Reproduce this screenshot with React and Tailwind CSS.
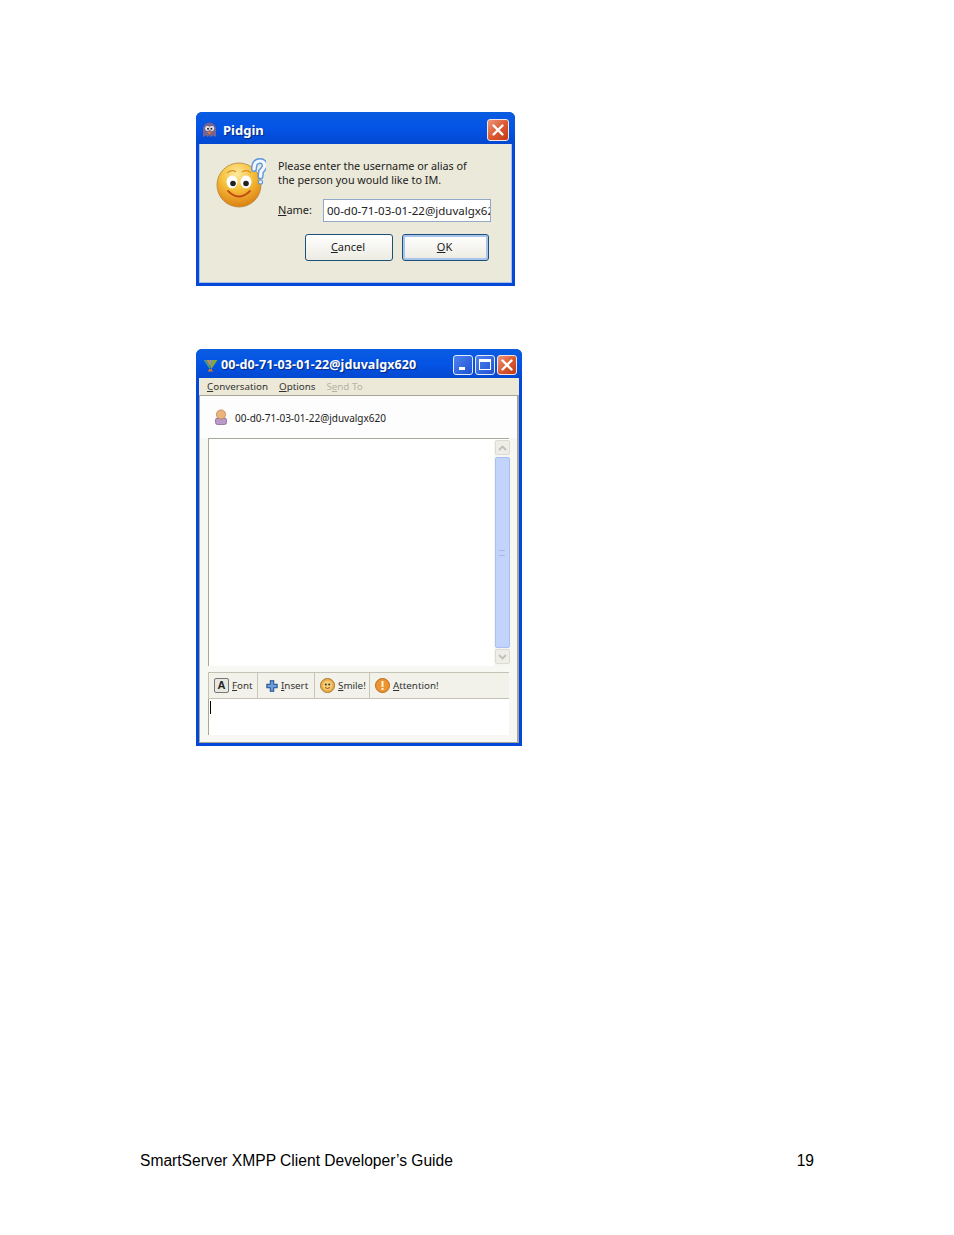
const ui = { fontFamily: '"Noto Sans", "DejaVu Sans", sans-serif' };

function U({ children }) {
  return <span className="underline underline-offset-1">{children}</span>;
}

function CloseBtn({ size = "w-[22px] h-[22px]", extra = "" }) {
  return (
    <div className={`${size} ${extra} rounded-[3px] border border-[#f3e6e0] bg-gradient-to-br from-[#e9967a] via-[#dc5a32] to-[#c03a16] flex items-center justify-center`}>
      <svg width="14" height="14" viewBox="0 0 14 14"><path d="M2.5 2.5 L11.5 11.5 M11.5 2.5 L2.5 11.5" stroke="#fff" strokeWidth="2.4" strokeLinecap="round" /></svg>
    </div>
  );
}

function TitleBar({ icon, title, buttons, h, text }) {
  return (
    <div className={`${h} flex items-center rounded-t-[6px] bg-gradient-to-b from-[#0a5ce0] via-[#0454e6] to-[#0348d0] px-[6px] pt-[4px]`}>
      {icon}
      <span className={`${text} font-bold text-white flex-1`} style={{ ...ui, textShadow: "1px 1px 1px #0a2a80" }}>{title}</span>
      {buttons}
    </div>
  );
}

function GhostIcon() {
  return (
    <svg width="15" height="16" viewBox="0 0 15 16" className="mr-[6px] ml-0">
      <path d="M1 15 V7 a6.5 6.5 0 0 1 13 0 V15 L11 13.5 9 15 7.5 13.5 5.5 15 4 13.5 Z" fill="#77648f" />
      <circle cx="5.5" cy="6.5" r="2.4" fill="#e8e8f0" /><circle cx="9.8" cy="6.5" r="2.4" fill="#e8e8f0" />
      <circle cx="6" cy="6.8" r="1" fill="#222" /><circle cx="9.4" cy="6.8" r="1" fill="#222" />
      <path d="M5 10 L10 9.5 L7.5 12.5 Z" fill="#e9792a" />
    </svg>
  );
}

function Smiley() {
  return (
    <svg width="50" height="50" viewBox="0 0 50 50">
      <defs>
        <radialGradient id="sg" cx="45%" cy="25%" r="80%">
          <stop offset="0%" stopColor="#fdeaa0" /><stop offset="45%" stopColor="#f6c03a" /><stop offset="100%" stopColor="#d9780e" />
        </radialGradient>
      </defs>
      <circle cx="23" cy="27" r="22" fill="url(#sg)" stroke="#b4843c" strokeWidth="0.8" />
      <ellipse cx="16" cy="24" rx="5.5" ry="6.5" fill="#fff" /><ellipse cx="30" cy="24" rx="5.5" ry="6.5" fill="#fff" />
      <circle cx="17" cy="25.5" r="2.8" fill="#222" /><circle cx="30" cy="25.5" r="2.8" fill="#222" />
      <path d="M11 15 q5 -4 9 -1 M26 14 q5 -3 9 1" stroke="#d8902a" strokeWidth="1.2" fill="none" />
      <path d="M12 33 q11 11 22 0" stroke="#c24a18" strokeWidth="1.8" fill="none" strokeLinecap="round" />
      <path d="M38 11 q0 -8 6 -8 q5 0 4.5 5.5 q-1 3 -3.5 5 l-0.5 5" stroke="#5b97dc" strokeWidth="6" fill="none" strokeLinecap="round" />
      <path d="M38 11 q0 -8 6 -8 q5 0 4.5 5.5 q-1 3 -3.5 5 l-0.5 5" stroke="#f4f8fe" strokeWidth="3.2" fill="none" strokeLinecap="round" />
      <circle cx="44.5" cy="24" r="2.6" fill="#5b97dc" /><circle cx="44.5" cy="24" r="1.4" fill="#f4f8fe" />
    </svg>
  );
}

function XpButton({ children, def, w }) {
  return (
    <div className={`${w} h-[27px] pr-[2px] rounded-[3px] border border-[#1c4f7a] bg-gradient-to-b from-white to-[#ecebe2] flex items-center justify-center text-[11px] text-[#222] ${def ? "shadow-[inset_0_0_0_2px_#a9c4ea]" : ""}`} style={ui}>
      {children}
    </div>
  );
}

function Dialog() {
  return (
    <div className="w-[319px] h-[174px] ml-[196px] flex flex-col rounded-t-[6px] bg-[#0348d8]">
      <TitleBar h="h-[32px]" text="text-[13px] pt-[1px]" icon={<GhostIcon />} title="Pidgin" buttons={<CloseBtn extra="-mt-[1px]" />} />
      <div className="flex-1 mx-[3px] mb-[3px] bg-[#ebe9d9] border-x border-b border-[#a9c0e4] flex pt-[15px]">
        <div className="w-[65px] pl-[16px] -mt-[1px] shrink-0"><Smiley /></div>
        <div className="ml-[13px] flex-1 pr-[19px]">
          <p className="text-[10.8px] leading-[14px] text-[#222] whitespace-nowrap" style={ui}>Please enter the username or alias of<br />the person you would like to IM.</p>
          <div className="flex items-center mt-[12px]">
            <span className="w-[45px] text-[11px] text-[#222]" style={ui}><U>N</U>ame:</span>
            <div className="w-[168px] h-[23px] bg-white border border-[#92a9c8] overflow-hidden flex items-center pl-[3px] text-[11.5px] text-[#222] whitespace-nowrap" style={ui}>00-d0-71-03-01-22@jduvalgx620</div>
          </div>
          <div className="flex gap-[9px] mt-[12px] ml-[27px]">
            <XpButton w="w-[88px]"><U>C</U>ancel</XpButton>
            <XpButton w="w-[87px]" def><U>O</U>K</XpButton>
          </div>
        </div>
      </div>
    </div>
  );
}

function VIcon() {
  return (
    <svg width="15" height="13" viewBox="0 0 15 13" className="mr-[3px] ml-[1px]">
      <path d="M0.5 1 L3.5 1 L7.5 8 L6.5 10 Z" fill="#3f9a8e" />
      <path d="M3.5 1 L6.5 1 L7.5 8 Z" fill="#e08a3c" />
      <path d="M6.5 1 L9 1 L7.5 8 Z" fill="#8a9ac0" />
      <path d="M9 1 L14.5 1 L8.5 10 L7.5 8 Z" fill="#86a83a" />
      <path d="M6.5 10 L8.5 10 L10 12.5 L4.5 12.5 Z" fill="#d8782a" />
    </svg>
  );
}

function WinBtn({ children }) {
  return <div className="w-[20px] h-[20px] rounded-[3px] border border-[#e4ecfa] bg-gradient-to-br from-[#4f82ec] to-[#1f52d4] flex items-center justify-center">{children}</div>;
}

function ToolIcon({ kind }) {
  if (kind === "font") return <div className="w-[15px] h-[15px] rounded-[2px] border border-[#777] bg-[#e8e8e0] flex items-center justify-center text-[11px] font-bold text-[#222] leading-none" style={{ fontFamily: '"Liberation Sans", sans-serif' }}>A</div>;
  if (kind === "insert") return <svg width="12" height="12" viewBox="0 0 14 14"><path d="M5 1 h4 v4 h4 v4 h-4 v4 h-4 v-4 h-4 v-4 h4 Z" fill="#6f9fdc" stroke="#1f4c8c" strokeWidth="1.2" /></svg>;
  if (kind === "smile") return <svg width="15" height="15" viewBox="0 0 15 15"><circle cx="7.5" cy="7.5" r="7" fill="#eeb04c" stroke="#a87428" /><circle cx="7.5" cy="7.5" r="4.5" fill="#f6d078" /><circle cx="5.8" cy="6.5" r="1" fill="#333" /><circle cx="9.2" cy="6.5" r="1" fill="#333" /><path d="M5 9.5 q2.5 2 5 0" stroke="#a04a10" fill="none" /></svg>;
  return <svg width="15" height="15" viewBox="0 0 15 15"><circle cx="7.5" cy="7.5" r="7" fill="#ec9430" stroke="#b8681c" /><rect x="6.5" y="3" width="2" height="6" fill="#fff3dc" /><rect x="6.5" y="10" width="2" height="2" fill="#fff3dc" /></svg>;
}

function ToolItem({ kind, children, width, pl, last }) {
  return (
    <div className={`h-full flex items-center gap-[3px] ${pl} ${last ? "" : "border-r border-[#c8c6b8]"}`} style={{ width }}>
      <ToolIcon kind={kind} />
      <span className="text-[9.8px] text-[#333] pt-[1px]" style={ui}>{children}</span>
    </div>
  );
}

function ScrollBtn({ up }) {
  return (
    <div className="w-[15px] h-[15px] shrink-0 rounded-[2px] border border-[#dedcd2] bg-[#eeeee6] flex items-center justify-center">
      <svg width="9" height="6" viewBox="0 0 9 6"><path d={up ? "M1 5 L4.5 1.5 L8 5" : "M1 1 L4.5 4.5 L8 1"} stroke="#c0c0b8" strokeWidth="1.8" fill="none" /></svg>
    </div>
  );
}

function Chat() {
  return (
    <div className="w-[326px] h-[397px] ml-[196px] mt-[63px] flex flex-col rounded-t-[6px] bg-[#0348d8]">
      <TitleBar h="h-[29px]" text="text-[12.5px] tracking-[0.1px]" icon={<VIcon />}
        title="00-d0-71-03-01-22@jduvalgx620"
        buttons={
          <div className="flex gap-[2px] -mr-[1px] -mt-[2px]">
            <WinBtn><div className="w-[6px] h-[3px] bg-white mt-[8px] -ml-[3px]" /></WinBtn>
            <WinBtn><div className="w-[12px] h-[11px] border border-white border-t-[3px]" /></WinBtn>
            <CloseBtn size="w-[20px] h-[20px]" />
          </div>
        } />
      <div className="flex-1 mx-[3px] mb-[3px] flex flex-col bg-[#ece9d8] min-h-0">
        <div className="h-[17px] flex items-center gap-[11px] pl-[8px] pt-[1px] text-[9.8px] text-[#333]" style={ui}>
          <span><U>C</U>onversation</span>
          <span><U>O</U>ptions</span>
          <span className="text-[#b5b3a8]">S<U>e</U>nd To</span>
        </div>
        <div className="flex-1 border border-[#a8a698] bg-[#f7f7f4] border-r-2 flex flex-col min-h-0">
          <div className="h-[42px] shrink-0 flex items-center pl-[14px] bg-white/80">
            <svg width="14" height="16" viewBox="0 0 14 16"><rect x="1.5" y="9" width="11" height="6.5" rx="2" fill="#b89ac8" stroke="#7a5c90" strokeWidth="0.7" /><circle cx="7" cy="5.5" r="4.6" fill="#ecb47c" stroke="#b47c44" strokeWidth="0.7" /></svg>
            <span className="ml-[7px] mt-[3px] text-[10px] text-[#222]" style={ui}>00-d0-71-03-01-22@jduvalgx620</span>
          </div>
          <div className="h-[228px] shrink-0 mx-[8px] border-t border-l border-[#a8a698] bg-white flex justify-end pt-[1px]">
            <div className="w-[16px] -mr-[1px] flex flex-col items-center bg-[#f6f6f0] gap-[1px] pb-[2px]">
              <ScrollBtn up />
              <div className="flex-1 w-[15px] mt-[1px] rounded-[2px] border border-[#a8c0f4] bg-[#c2d4fc] flex items-center justify-center">
                <div className="w-[6px] h-[6px] border-y border-[#a4b8e4]" />
              </div>
              <ScrollBtn />
            </div>
          </div>
          <div className="mx-[8px] mt-[6px] h-[27px] shrink-0 border-y border-[#c4c2b4] border-l bg-[#f2f1ea] flex items-center">
            <ToolItem kind="font" width={49} pl="pl-[5px]"><U>F</U>ont</ToolItem>
            <ToolItem kind="insert" width={57} pl="pl-[8px]"><U>I</U>nsert</ToolItem>
            <ToolItem kind="smile" width={55} pl="pl-[5px]"><U>S</U>mile!</ToolItem>
            <ToolItem kind="attention" width={80} pl="pl-[5px]" last><U>A</U>ttention!</ToolItem>
          </div>
          <div className="mx-[8px] h-[36px] shrink-0 border-l border-[#a8a698] bg-white pl-[1px] pt-[2px]">
            <div className="w-px h-[13px] bg-black" />
          </div>
        </div>
      </div>
    </div>
  );
}

export default function App() {
  return (
    <div className="w-[954px] h-[1235px] bg-white pt-[112px] flex flex-col">
      <Dialog />
      <Chat />
      <div className="mt-[403px] ml-[140px] mr-[140px] flex justify-between text-[15.6px] text-black" style={{ fontFamily: '"Liberation Sans", sans-serif' }}>
        <span>SmartServer XMPP Client Developer’s Guide</span>
        <span>19</span>
      </div>
    </div>
  );
}
